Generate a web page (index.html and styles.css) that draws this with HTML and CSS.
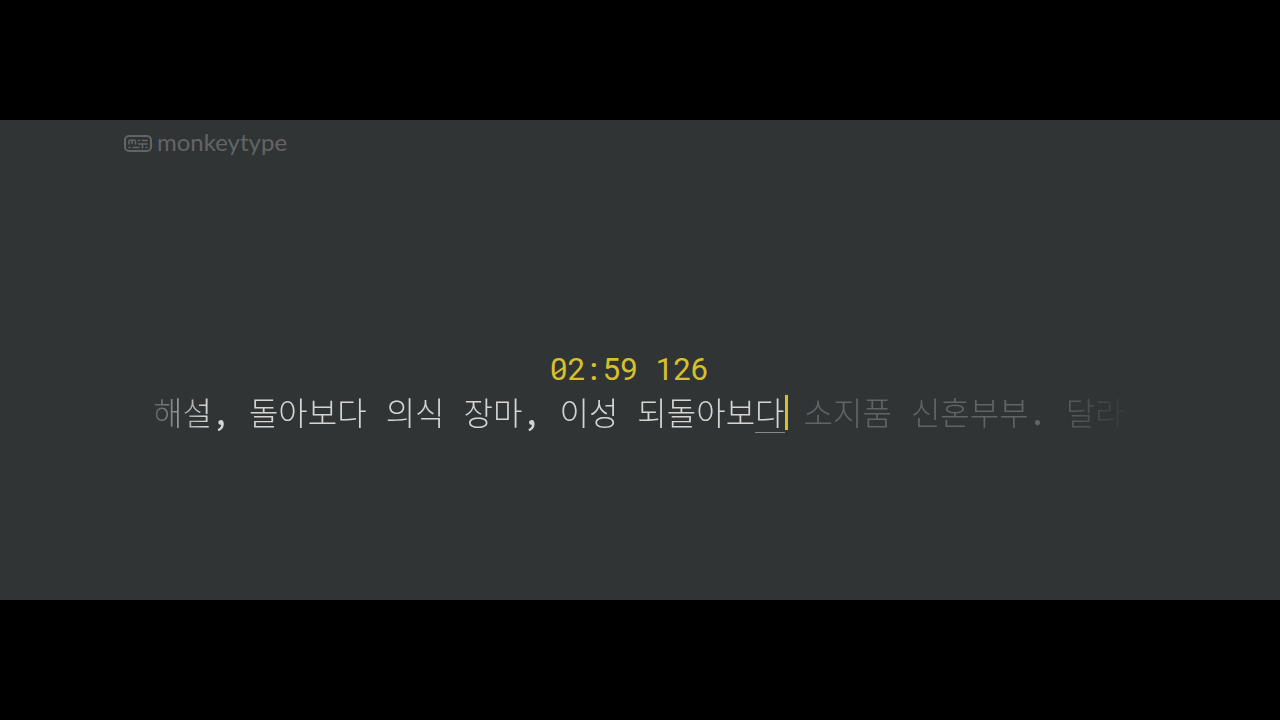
FILE: index.html
```
<!DOCTYPE html>
<html lang="ko">
<head>
    <meta charset="UTF-8">
    <meta name="viewport" content="width=device-width, initial-scale=1">
    <title>monkeytype</title>
    <link rel="stylesheet" href="styles.css">
</head>
<body>
    <div class="screen">
        <header class="header">
            <a class="logo" href="#">
                <svg class="logo-icon" viewBox="0 0 28 18" aria-hidden="true">
                    <rect x="1" y="1" width="26" height="15" rx="4" />
                    <path d="M5 9V6.500Q5 5 6.500 5Q8 5 8 6.500V8.500M8 6.500Q8 5 9.500 5Q11.500 5 11.500 6.500V9" />
                    <path d="M14.500 5.500h1M18.500 5.500h4.500M14.500 9h8.500M18.500 9v4M5 12.500h1M9 12.500h6M22 12.500h1" />
                </svg>
                <span class="logo-text">monkeytype</span>
            </a>
        </header>

        <main class="test">
            <!-- timer + live wpm -->
            <div class="stats">
                <span class="time"><span class="zero">0</span>2<span class="colon">:</span>59</span>
                <span class="wpm">126</span>
            </div>

            <!-- single line tape mode -->
            <div class="words">
                <span class="word typed">해설<span class="mark">,</span></span>
                <span class="word typed">돌아보다</span>
                <span class="word typed">의식</span>
                <span class="word typed">장마<span class="mark">,</span></span>
                <span class="word typed">이성</span>
                <span class="word typed active">되돌아보<span class="current">다</span></span>
                <span class="word">소지품</span>
                <span class="word">신혼부부<span class="mark">.</span></span>
                <span class="word">달라</span>
            </div>
        </main>
    </div>
</body>
</html>
```
FILE: styles.css
```
body {
    margin: 0;
    min-height: 100vh;
    display: flex;
    align-items: center;
    background: #000;
}

.screen {
    width: 100%;
    aspect-ratio: 8 / 3;
    display: flex;
    flex-direction: column;
    background: #313435;
    color: #616566;
}

.header {
    padding: 8px 124px 0;
}

.logo {
    display: inline-flex;
    align-items: center;
    gap: 5px;
    color: inherit;
    text-decoration: none;
}

.logo-icon {
    width: 28px;
    height: 18px;
    margin-top: 4px;
    fill: none;
    stroke: currentColor;
    stroke-width: 2;
}

.logo-icon path {
    stroke-width: 1.6;
    stroke-linecap: round;
}

.logo-text {
    font-family: Lato, sans-serif;
    font-size: 24px;
    line-height: 28px;
}

.test {
    flex: 1;
    padding: 196px 124px 0;
}

.stats {
    display: flex;
    justify-content: center;
    gap: 18px;
    padding-right: 22px;
    color: #d8c02c;
    font-family: Roboto, sans-serif;
    font-size: 31px;
    line-height: 34px;
}

.zero {
    position: relative;
}

/* slash inside the zero */
.zero::after {
    content: "";
    position: absolute;
    left: 2px;
    top: 50%;
    width: 14px;
    height: 2px;
    background: currentColor;
    transform: rotate(-35deg);
}

.colon {
    display: inline-block;
    width: 18px;
    text-align: center;
    font-weight: 500;
}

.words {
    display: flex;
    gap: 19px;
    padding-left: 29px;
    white-space: nowrap;
    font-family: "Noto Sans CJK KR", sans-serif;
    font-size: 32px;
    font-weight: 300;
    line-height: 48px;
    mask-image: linear-gradient(90deg, transparent 1%, #000 8%, #000 90%, transparent 98%);
}

.typed {
    color: #d2d5d2;
}

.mark {
    display: inline-block;
    width: 18px;
    text-align: center;
    font-weight: 500;
}

.current {
    position: relative;
    display: inline-block;
}

/* caret */
.current::after {
    content: "";
    position: absolute;
    right: -3px;
    top: 8px;
    width: 3px;
    height: 35px;
    background: #d8c02c;
}

/* composing underline */
.current::before {
    content: "";
    position: absolute;
    left: 0;
    right: 0;
    top: 45px;
    height: 1px;
    background: #858988;
}
```
